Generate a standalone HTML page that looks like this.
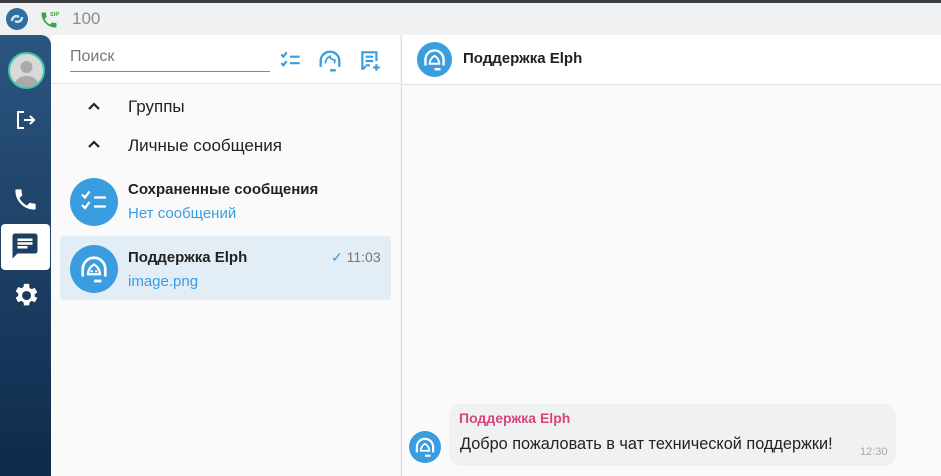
<!DOCTYPE html>
<html><head><meta charset="utf-8"><style>
*{margin:0;padding:0;box-sizing:border-box}
body{width:941px;height:476px;overflow:hidden;background:#f0f1f3;font-family:"Liberation Sans",Roboto,sans-serif;position:relative}
.abs{position:absolute}
.topline{left:0;top:0;width:941px;height:3px;background:#3a3d42}
.side{left:0;top:35px;width:51px;height:441px;background:linear-gradient(#2b5580,#0f2a4a);border-top-right-radius:10px}
.mid{left:51px;top:35px;width:349px;height:441px;background:#fafafa}
.midh{left:51px;top:35px;width:349px;height:49px;background:#fff;border-bottom:1px solid #e3e3e3}
.right{left:401px;top:35px;width:540px;height:441px;background:#fafafa;border-left:1px solid #e0e0e0}
.righth{left:401px;top:35px;width:540px;height:50px;background:#fff;border-bottom:1px solid #e0e0e0;border-left:1px solid #e0e0e0}
.av{border-radius:50%;background:#3a9de0}
</style></head><body>
<div class="abs topline"></div>
<svg class="abs" style="left:6px;top:8px" width="22" height="22" viewBox="0 0 22 22"><circle cx="11" cy="11" r="11" fill="#2e6fa0"/><path d="M6 13c0-4 4-6 7-4M16 9c0 4-4 6-7 4" stroke="#cfe8f7" stroke-width="2.5" fill="none"/></svg>
<svg class="abs" style="left:38px;top:10px" width="22" height="20" viewBox="0 0 24 24"><path d="M6.6 10.8c1.4 2.8 3.8 5.1 6.6 6.6l2.2-2.2c.3-.3.7-.4 1-.2 1.1.4 2.3.6 3.6.6.6 0 1 .4 1 1V20c0 .6-.4 1-1 1C10.6 21 3 13.4 3 4c0-.6.4-1 1-1h3.5c.6 0 1 .4 1 1 0 1.3.2 2.5.6 3.6.1.3 0 .7-.2 1z" fill="#3fa34d"/><text x="13" y="7" font-size="7" font-weight="bold" fill="#3fa34d" font-family="Liberation Sans">SIP</text></svg>
<div class="abs" style="left:72px;top:9px;font-size:17px;color:#8a8d90">100</div>

<div class="abs side"></div>
<div class="abs" style="left:8px;top:52px;width:37px;height:37px;border-radius:50%;background:#d9d9d9;border:2px solid #3cc8a8;overflow:hidden"><svg width="33" height="33" viewBox="0 0 33 33"><circle cx="16.5" cy="13" r="6" fill="#aaa"/><path d="M4 33c1-8 6-11 12.5-11S28 25 29 33z" fill="#aaa"/></svg></div>
<svg class="abs" style="left:14px;top:108px" width="24" height="24" viewBox="0 0 24 24"><path d="M10 4H4v16h6M10 12h10M16 8l4 4-4 4" stroke="#fff" stroke-width="2" fill="none"/></svg>
<svg class="abs" style="left:12px;top:186px" width="27" height="27" viewBox="0 0 24 24"><path d="M6.6 10.8c1.4 2.8 3.8 5.1 6.6 6.6l2.2-2.2c.3-.3.7-.4 1-.2 1.1.4 2.3.6 3.6.6.6 0 1 .4 1 1V20c0 .6-.4 1-1 1C10.6 21 3 13.4 3 4c0-.6.4-1 1-1h3.5c.6 0 1 .4 1 1 0 1.3.2 2.5.6 3.6.1.3 0 .7-.2 1z" fill="#fff"/></svg>
<div class="abs" style="left:1px;top:224px;width:49px;height:46px;background:#fff;border-radius:4px"></div>
<svg class="abs" style="left:10px;top:231px" width="30" height="30" viewBox="0 0 24 24"><path d="M20 2H4c-1.1 0-2 .9-2 2v18l4-4h14c1.1 0 2-.9 2-2V4c0-1.1-.9-2-2-2zM6 9h12v2H6zm8 5H6v-2h8zm4-6H6V6h12z" fill="#1d3f63"/></svg>
<svg class="abs" style="left:10px;top:280px" width="31" height="31" viewBox="0 0 24 24"><path d="M19.1 12.9a7 7 0 0 0 0-1.8l2-1.6-2-3.4-2.4 1a7 7 0 0 0-1.6-.9L14.8 3h-4l-.4 2.5a7 7 0 0 0-1.6.9l-2.4-1-2 3.4 2 1.6a7 7 0 0 0 0 1.8l-2 1.6 2 3.4 2.4-1c.5.4 1 .7 1.6.9l.4 2.5h4l.4-2.5c.6-.2 1.1-.5 1.6-.9l2.4 1 2-3.4zM12.8 15.5a3.5 3.5 0 1 1 0-7 3.5 3.5 0 0 1 0 7z" fill="#fff"/></svg>

<div class="abs mid"></div>
<div class="abs midh"></div>
<div class="abs" style="left:70px;top:48px;font-size:16px;color:#777">Поиск</div>
<div class="abs" style="left:70px;top:71px;width:200px;height:1px;background:#888"></div>
<svg class="abs" style="left:278px;top:48px" width="26" height="26" viewBox="0 0 24 24"><path d="M3 6l2 2 3-4M3 14l2 2 3-4M11 8h9M11 14h9" stroke="#3a9de0" stroke-width="2" fill="none"/></svg>
<svg class="abs" style="left:316px;top:47px" width="28" height="28" viewBox="0 0 24 24"><path d="M4 15v-3a8 8 0 0 1 16 0v3M4 13v4M20 13v4M12 20h5" stroke="#3a9de0" stroke-width="2" fill="none"/><path d="M8 14c0-3 2-5 4-6 0 2 2 3 4 3v3" stroke="#3a9de0" stroke-width="1.5" fill="none"/></svg>
<svg class="abs" style="left:358px;top:48px" width="26" height="26" viewBox="0 0 24 24"><path d="M4 20V4h13v8M7 8h7M7 12h7M7 16h4M4 20l3-3M17 15v6M14 18h6" stroke="#3a9de0" stroke-width="2" fill="none"/></svg>

<svg class="abs" style="left:87px;top:101px" width="14" height="10" viewBox="0 0 14 10"><path d="M2 8l5-5 5 5" stroke="#222" stroke-width="2.2" fill="none"/></svg>
<div class="abs" style="left:128px;top:97px;font-size:17px;color:#222">Группы</div>
<svg class="abs" style="left:87px;top:139px" width="14" height="10" viewBox="0 0 14 10"><path d="M2 8l5-5 5 5" stroke="#222" stroke-width="2.2" fill="none"/></svg>
<div class="abs" style="left:128px;top:136px;font-size:17px;color:#222">Личные сообщения</div>

<div class="abs av" style="left:70px;top:178px;width:48px;height:48px"></div>
<svg class="abs" style="left:76px;top:184px" width="36" height="36" viewBox="0 0 24 24"><path d="M4 7l2 2 3-4M4 14l2 2 3-4M12 9h8M12 15h8" stroke="#fff" stroke-width="1.5" fill="none"/></svg>
<div class="abs" style="left:128px;top:181px;font-size:15px;font-weight:bold;color:#222">Сохраненные сообщения</div>
<div class="abs" style="left:128px;top:205px;font-size:15px;color:#3a9de0">Нет сообщений</div>

<div class="abs" style="left:60px;top:236px;width:331px;height:64px;background:#e3edf5;border-radius:4px"></div>
<div class="abs av" style="left:70px;top:245px;width:48px;height:48px"></div>
<svg class="abs" style="left:76px;top:251px" width="36" height="36" viewBox="0 0 24 24"><path d="M4.5 15v-3a7.5 7.5 0 0 1 15 0v3M4.5 13v4M19.5 13v4M12 20h5" stroke="#fff" stroke-width="1.8" fill="none"/><path d="M8 15.5c0-3 2-5.5 4-6.5 2 1 4 3.5 4 6.5z" stroke="#fff" stroke-width="1.5" fill="none"/><circle cx="10.5" cy="13.5" r=".8" fill="#fff"/><circle cx="13.5" cy="13.5" r=".8" fill="#fff"/></svg>
<div class="abs" style="left:128px;top:249px;font-size:15px;font-weight:bold;color:#222">Поддержка Elph</div>
<div class="abs" style="left:331px;top:249px;font-size:14px;color:#777"><span style="color:#3a9de0">✓</span> 11:03</div>
<div class="abs" style="left:128px;top:273px;font-size:15px;color:#3a9de0">image.png</div>

<div class="abs right"></div>
<div class="abs righth"></div>
<div class="abs av" style="left:417px;top:42px;width:35px;height:35px"></div>
<svg class="abs" style="left:420px;top:45px" width="29" height="29" viewBox="0 0 24 24"><path d="M4.5 15v-3a7.5 7.5 0 0 1 15 0v3M4.5 13v4M19.5 13v4M12 20h5" stroke="#fff" stroke-width="2" fill="none"/><path d="M8 15.5c0-3 2-5.5 4-6.5 2 1 4 3.5 4 6.5z" stroke="#fff" stroke-width="1.6" fill="none"/></svg>
<div class="abs" style="left:463px;top:50px;font-size:15px;font-weight:bold;color:#222">Поддержка Elph</div>

<div class="abs" style="left:449px;top:404px;width:447px;height:62px;background:#f0f1f3;border-radius:12px"></div>
<div class="abs av" style="left:409px;top:431px;width:32px;height:32px"></div>
<svg class="abs" style="left:412px;top:434px" width="26" height="26" viewBox="0 0 24 24"><path d="M4.5 15v-3a7.5 7.5 0 0 1 15 0v3M4.5 13v4M19.5 13v4M12 20h5" stroke="#fff" stroke-width="2" fill="none"/><path d="M8 15.5c0-3 2-5.5 4-6.5 2 1 4 3.5 4 6.5z" stroke="#fff" stroke-width="1.6" fill="none"/></svg>
<div class="abs" style="left:459px;top:410px;font-size:14px;font-weight:bold;color:#d9457a">Поддержка Elph</div>
<div class="abs" style="left:460px;top:435px;font-size:16.3px;color:#222">Добро пожаловать в чат технической поддержки!</div>
<div class="abs" style="left:860px;top:446px;font-size:11px;color:#aaa">12:30</div>
</body></html>
